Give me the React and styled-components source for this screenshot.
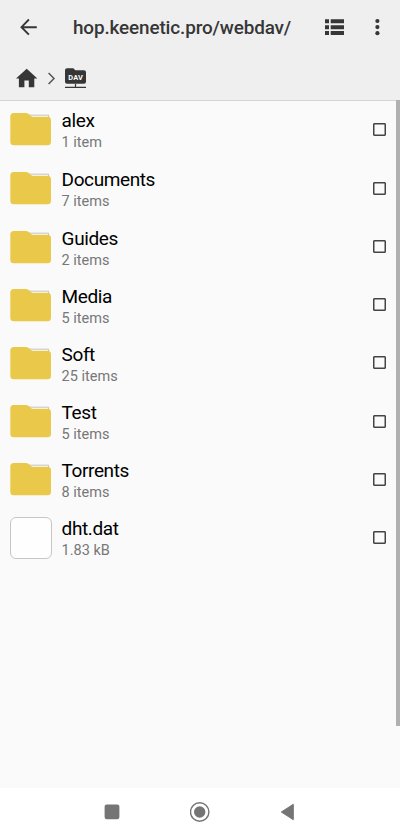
import React, { useState } from "react";
import styled, { createGlobalStyle } from "styled-components";

const entries = [
  { name: "alex", detail: "1 item", folder: true },
  { name: "Documents", detail: "7 items", folder: true },
  { name: "Guides", detail: "2 items", folder: true },
  { name: "Media", detail: "5 items", folder: true },
  { name: "Soft", detail: "25 items", folder: true },
  { name: "Test", detail: "5 items", folder: true },
  { name: "Torrents", detail: "8 items", folder: true },
  { name: "dht.dat", detail: "1.83 kB", folder: false },
];

const BackIcon = () => (
  <svg width="18" height="18" viewBox="0 0 18 18" fill="none" stroke="#363636" strokeWidth="1.9">
    <path d="M8.9 1.5 1.5 9.2l7.4 7.5M1.6 9.2h15.2" />
  </svg>
);

const ListIcon = () => (
  <svg width="19" height="17" viewBox="0 0 19 17" fill="#363636">
    <path d="M0 .3h4v4H0zM5.7.3H19v4H5.7zM0 6.2h4v4H0zM5.7 6.2H19v4H5.7zM0 12.1h4v4H0zM5.7 12.1H19v4H5.7z" />
  </svg>
);

const MoreIcon = () => (
  <svg width="6" height="18" viewBox="0 0 6 18" fill="#363636">
    <circle cx="3.4" cy="3" r="2.1" />
    <circle cx="3.4" cy="9.1" r="2.1" />
    <circle cx="3.4" cy="15.2" r="2.1" />
  </svg>
);

const HomeIcon = () => (
  <svg width="22" height="20" viewBox="0 0 22 20" fill="#363636">
    <path d="M10.7.7 0 10.5h2.9v8.7h5.5v-6.6h4.4v6.6h5.5v-8.7h3.1z" />
  </svg>
);

const ChevronIcon = () => (
  <svg width="8" height="13" viewBox="0 0 8 13" fill="none" stroke="#555" strokeWidth="1.5">
    <path d="M.6 1 6 6.5.6 12" />
  </svg>
);

const DavIcon = () => (
  <svg width="22" height="21" viewBox="0 0 22 21" fill="#363636">
    <path d="M2 .2h6.3l2 2H19q2 0 2 2v9.6q0 2-2 2H2q-2 0-2-2V2.2q0-2 2-2z" />
    <path d="M0 18.8h9.9v-3h1.2v3H21v1.2H0z" />
    <text
      x="10.6"
      y="12"
      textAnchor="middle"
      textLength="14.5"
      fontFamily="Roboto, sans-serif"
      fontSize="7.4"
      fontWeight="700"
      fill="#fff"
    >
      DAV
    </text>
  </svg>
);

const FolderIcon = () => (
  <svg width="42" height="42" viewBox="0 0 42 42">
    <path d="M18 7.2h20.6v5H18z" fill="#fff" stroke="#b4b4b4" strokeWidth=".8" />
    <path
      d="M3.8 4.9h12q1.6 0 2.8 1.1l2 1.8q1.1.9 2.6.9h14.3q3.5 0 3.5 3.5v21.5q0 3.5-3.5 3.5H3.8q-3.5 0-3.5-3.5V8.4q0-3.5 3.5-3.5z"
      fill="#eac84a"
    />
  </svg>
);

const NavBar = () => (
  <Navigation>
    <svg width="16" height="16" viewBox="0 0 16 16">
      <rect x=".6" y=".5" width="14.8" height="14.8" rx="2.2" fill="#757575" />
    </svg>
    <svg width="20" height="20" viewBox="0 0 20 20">
      <circle cx="9.7" cy="10" r="9.2" fill="none" stroke="#757575" strokeWidth="1.4" />
      <circle cx="9.7" cy="10" r="5.7" fill="#757575" />
    </svg>
    <svg width="16" height="18" viewBox="0 0 16 18">
      <path d="M1.3 9 13.3 1.3v15.4z" fill="#757575" stroke="#757575" strokeLinejoin="round" />
    </svg>
  </Navigation>
);

const App = () => {
  const [selected, setSelected] = useState([]);

  const toggle = (name) => {
    setSelected(
      selected.includes(name) ? selected.filter((n) => n !== name) : [...selected, name]
    );
  };

  return (
    <Screen>
      <GlobalStyle />
      <Header>
        <Toolbar>
          <IconButton aria-label="Back">
            <BackIcon />
          </IconButton>
          <Title>hop.keenetic.pro/webdav/</Title>
          <IconButton aria-label="View">
            <ListIcon />
          </IconButton>
          <IconButton aria-label="More">
            <MoreIcon />
          </IconButton>
        </Toolbar>
        <Breadcrumbs>
          <HomeIcon />
          <ChevronIcon />
          <DavIcon />
        </Breadcrumbs>
      </Header>
      <Content>
        <FileList>
          {entries.map((entry) => (
            <Row key={entry.name}>
              {entry.folder ? <FolderIcon /> : <FileThumb />}
              <Info>
                <Name>{entry.name}</Name>
                <Detail>{entry.detail}</Detail>
              </Info>
              <Checkbox
                role="checkbox"
                aria-label={entry.name}
                aria-checked={selected.includes(entry.name)}
                $checked={selected.includes(entry.name)}
                onClick={() => toggle(entry.name)}
              />
            </Row>
          ))}
        </FileList>
        <ScrollThumb />
      </Content>
      <NavBar />
    </Screen>
  );
};

const GlobalStyle = createGlobalStyle`
  * {
    box-sizing: border-box;
  }
  body {
    margin: 0;
    font-family: Roboto, "Liberation Sans", sans-serif;
  }
  button {
    padding: 0;
    border: none;
    background: none;
    cursor: pointer;
  }
  svg {
    display: block;
    flex-shrink: 0;
  }
`;
const Screen = styled.div`
  display: flex;
  flex-direction: column;
  height: 836px;
  background-color: #fafafa;
`;
const Header = styled.header`
  height: 101px;
  background-color: #efefef;
  border-bottom: 1px solid #d4d4d4;
`;
const Toolbar = styled.div`
  display: grid;
  grid-template-columns: 57px 1fr 40px 46px;
  align-items: center;
  height: 54px;
`;
const IconButton = styled.button`
  display: flex;
  align-items: center;
  justify-content: center;
  height: 54px;
`;
const Title = styled.h1`
  margin: 2px 0 0 16px;
  color: #363636;
  font-size: 18.9px;
  font-weight: 500;
  line-height: 24px;
  letter-spacing: -0.13px;
  white-space: nowrap;
`;
const Breadcrumbs = styled.div`
  display: flex;
  align-items: center;
  height: 45px;
  padding: 3px 0 0 16px;
  gap: 9.5px;
`;
const Content = styled.main`
  display: flex;
  flex: 1;
  margin-top: -1px;
`;
const FileList = styled.div`
  flex: 1;
`;
const Row = styled.div`
  display: flex;
  align-items: center;
  height: 58.2px;
  padding: 0 10px;
  &:first-child {
    margin-bottom: 1.1px;
  }
`;
const FileThumb = styled.div`
  width: 42px;
  height: 42px;
  border: 1px solid #c6c6c6;
  border-radius: 6px;
  background-color: #fefefe;
`;
const Info = styled.div`
  flex: 1;
  padding: 4.4px 0 0 9.6px;
`;
const Name = styled.div`
  color: #000;
  font-size: 19px;
  line-height: 24px;
  letter-spacing: -0.4px;
`;
const Detail = styled.div`
  color: #777;
  font-size: 14.5px;
  line-height: 20.4px;
`;
const Checkbox = styled.button`
  width: 13px;
  height: 13px;
  border: 1px solid #444;
  border-radius: 1px;
  box-shadow: inset 0 0 0 0.5px #444;
  background-color: ${(props) => (props.$checked ? "#444" : "transparent")};
`;
const ScrollThumb = styled.div`
  width: 4px;
  height: 626px;
  background-color: #b0b0b0;
`;
const Navigation = styled.nav`
  display: flex;
  align-items: center;
  justify-content: space-between;
  height: 48px;
  padding: 0 104px;
  background-color: #fff;
`;
export default App;
